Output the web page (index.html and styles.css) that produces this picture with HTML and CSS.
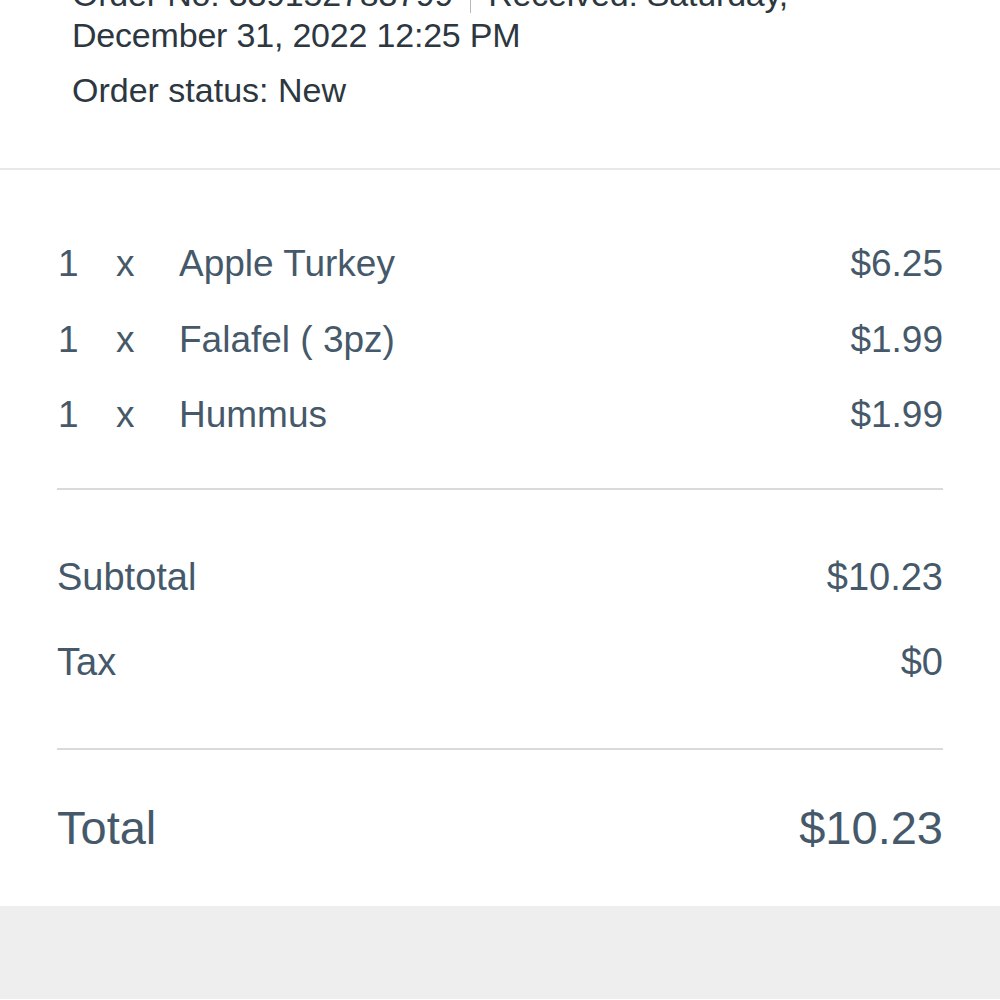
FILE: index.html
```html
<!doctype html>
<html lang="en">
<head>
    <meta charset="UTF-8">
    <meta name="viewport" content="width=device-width, initial-scale=1.0">
    <title>Order receipt</title>
    <link rel="stylesheet" href="styles.css">
</head>
<body>
    <div class="order-head">
        <div class="order-meta">
            <span class="order-no">Order No: 339152783799</span><span class="received">Received: Saturday,</span>
            December 31, 2022 12:25 PM
        </div>
        <div class="order-status">Order status: New</div>
    </div>
    <div class="receipt">
        <div class="items">
            <div class="item">
                <span class="qty">1</span>
                <span class="times">x</span>
                <span class="name">Apple Turkey</span>
                <span class="price">$6.25</span>
            </div>
            <div class="item">
                <span class="qty">1</span>
                <span class="times">x</span>
                <span class="name">Falafel ( 3pz)</span>
                <span class="price">$1.99</span>
            </div>
            <div class="item">
                <span class="qty">1</span>
                <span class="times">x</span>
                <span class="name">Hummus</span>
                <span class="price">$1.99</span>
            </div>
        </div>
        <div class="sums">
            <div class="sum-row">
                <span>Subtotal</span>
                <span>$10.23</span>
            </div>
            <div class="sum-row">
                <span>Tax</span>
                <span>$0</span>
            </div>
        </div>
        <div class="total">
            <span>Total</span>
            <span>$10.23</span>
        </div>
    </div>
    <div class="footer"></div>
</body>
</html>
```

FILE: styles.css
```css
* {
    margin: 0;
    padding: 0;
    box-sizing: border-box;
}
body {
    background-color: #fff;
    font-family: "Liberation Sans", Arial, sans-serif;
    color: #45596a;
    overflow: hidden;
}
.order-head {
    padding: 0 72px 57px;
    border-bottom: 2px solid #e8e8e8;
    color: #2c373f;
    font-size: 34px;
    line-height: 41px;
}
.order-meta {
    margin-top: -26px;
    letter-spacing: -0.2px;
}
.order-no {
    padding-right: 17px;
    border-right: 1px solid #b9b9b9;
    margin-right: 17px;
}
.order-status {
    margin-top: 14px;
}
.receipt {
    padding: 0 57px;
}
.items {
    padding: 56px 0 35px;
    border-bottom: 2px solid #dadada;
}
.item {
    display: grid;
    grid-template-columns: 59px 63px 1fr auto;
    font-size: 37px;
    line-height: 75.5px;
}
.qty {
    padding-left: 1px;
}
.price {
    text-align: right;
}
.sums {
    padding: 45px 0 43px;
    border-bottom: 2px solid #dadada;
}
.sum-row {
    display: flex;
    justify-content: space-between;
    font-size: 38px;
    line-height: 85px;
}
.total {
    display: flex;
    justify-content: space-between;
    font-size: 47px;
    line-height: 60px;
    padding: 48px 0;
}
.footer {
    height: 93px;
    background-color: #eeeeee;
}
```
